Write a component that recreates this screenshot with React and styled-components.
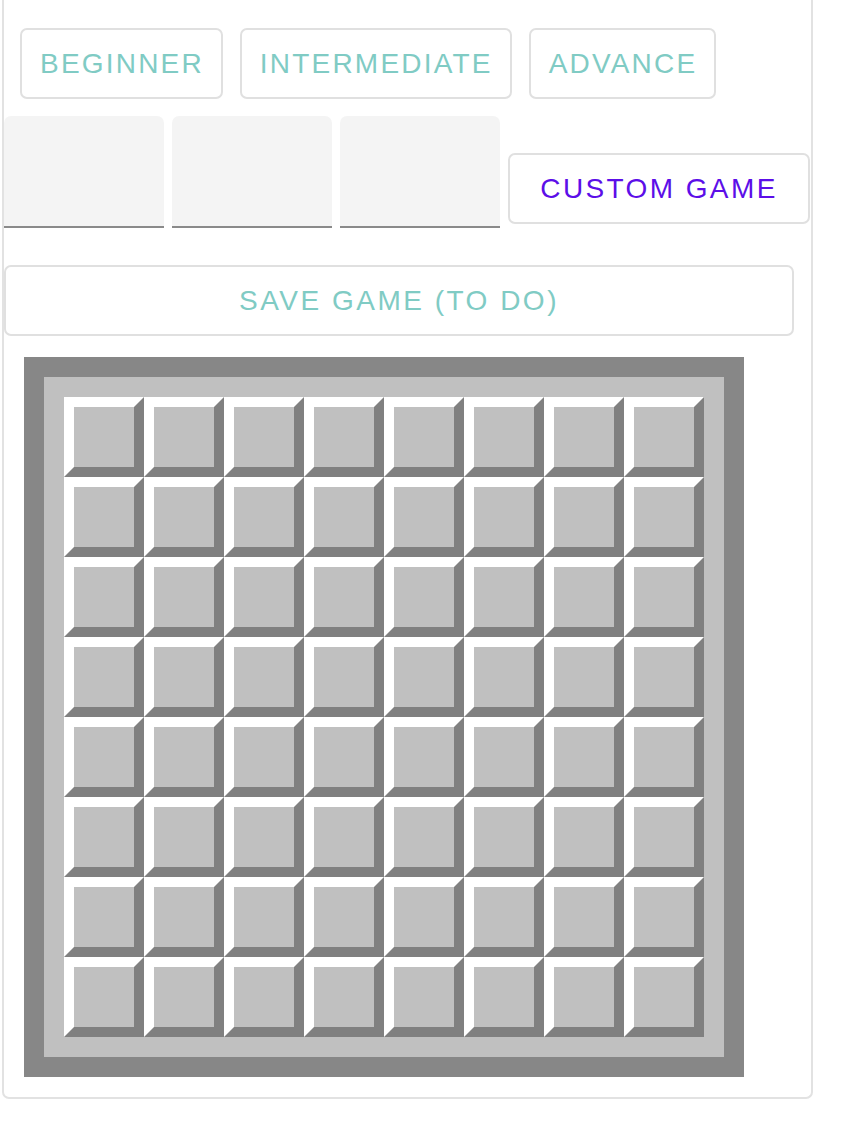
import React from 'react';
import styled, { createGlobalStyle } from 'styled-components';

const GlobalStyle = createGlobalStyle`
    body {
        margin: 0;
        background: #fff;
        font-family: "Liberation Sans", Arial, sans-serif;
    }
`;

const levels = ['Beginner', 'Intermediate', 'Advance'];
const SIZE = 8;

export default function App() {
    const cells = Array.from({ length: SIZE * SIZE }, (_, i) => i);

    return (
        <>
            <GlobalStyle />
            <Tarjeta>
                <FilaNiveles>
                    {levels.map((nivel) => (
                        <Boton key={nivel}>{nivel}</Boton>
                    ))}
                </FilaNiveles>
                <FilaCustom>
                    <Campo type='text' />
                    <Campo type='text' />
                    <Campo type='text' />
                    <BotonCustom>Custom game</BotonCustom>
                </FilaCustom>
                <BotonGuardar>Save game (to do)</BotonGuardar>
                <Tablero>
                    <Rejilla>
                        {cells.map((c) => (
                            <Celda key={c} />
                        ))}
                    </Rejilla>
                </Tablero>
            </Tarjeta>
        </>
    );
}

const Tarjeta = styled.div`
    width: 811px;
    box-sizing: border-box;
    margin-left: 2px;
    padding-top: 28px;
    padding-bottom: 20px;
    border: 2px solid #e2e2e2;
    border-top: none;
    border-radius: 0 0 7px 7px;
`;

const FilaNiveles = styled.div`
    display: flex;
    gap: 17px;
    margin-left: 16px;
`;

const Boton = styled.button`
    height: 71px;
    box-sizing: border-box;
    padding: 0 17px 0 18px;
    background: #fff;
    border: 2px solid #e0e0e0;
    border-radius: 7px;
    color: ${(p) => p.$color || '#80cbc4'};
    font-family: "Liberation Sans", Arial, sans-serif;
    font-size: 28px;
    letter-spacing: 2.2px;
    text-transform: uppercase;
    cursor: pointer;
`;

const FilaCustom = styled.div`
    display: flex;
    align-items: flex-end;
    gap: 8px;
    margin-top: 17px;
`;

const Campo = styled.input`
    width: 160px;
    height: 112px;
    box-sizing: border-box;
    margin: 0;
    padding: 0 12px;
    border: none;
    border-bottom: 2px solid #8a8a8a;
    border-radius: 7px 7px 0 0;
    background: #f4f4f4;
    font-size: 24px;
    outline: none;
`;

const BotonCustom = styled(Boton).attrs({ $color: '#5c0ee8' })`
    width: 302px;
    margin-bottom: 4px;
    padding: 0;
    letter-spacing: 2.4px;
`;

const BotonGuardar = styled(Boton)`
    display: block;
    width: 790px;
    margin-top: 37px;
    padding: 0;
    letter-spacing: 2.5px;
`;

const Tablero = styled.div`
    width: 720px;
    box-sizing: border-box;
    margin: 21px 0 0 20px;
    border: 20px solid #878787;
    padding: 20px;
    background: #c0c0c0;
`;

const Rejilla = styled.div`
    display: grid;
    grid-template-columns: repeat(${SIZE}, 80px);
    grid-auto-rows: 80px;
`;

const Celda = styled.div`
    box-sizing: border-box;
    border: 10px solid;
    border-color: #fff #808080 #808080 #fff;
    background: #c0c0c0;
`;
